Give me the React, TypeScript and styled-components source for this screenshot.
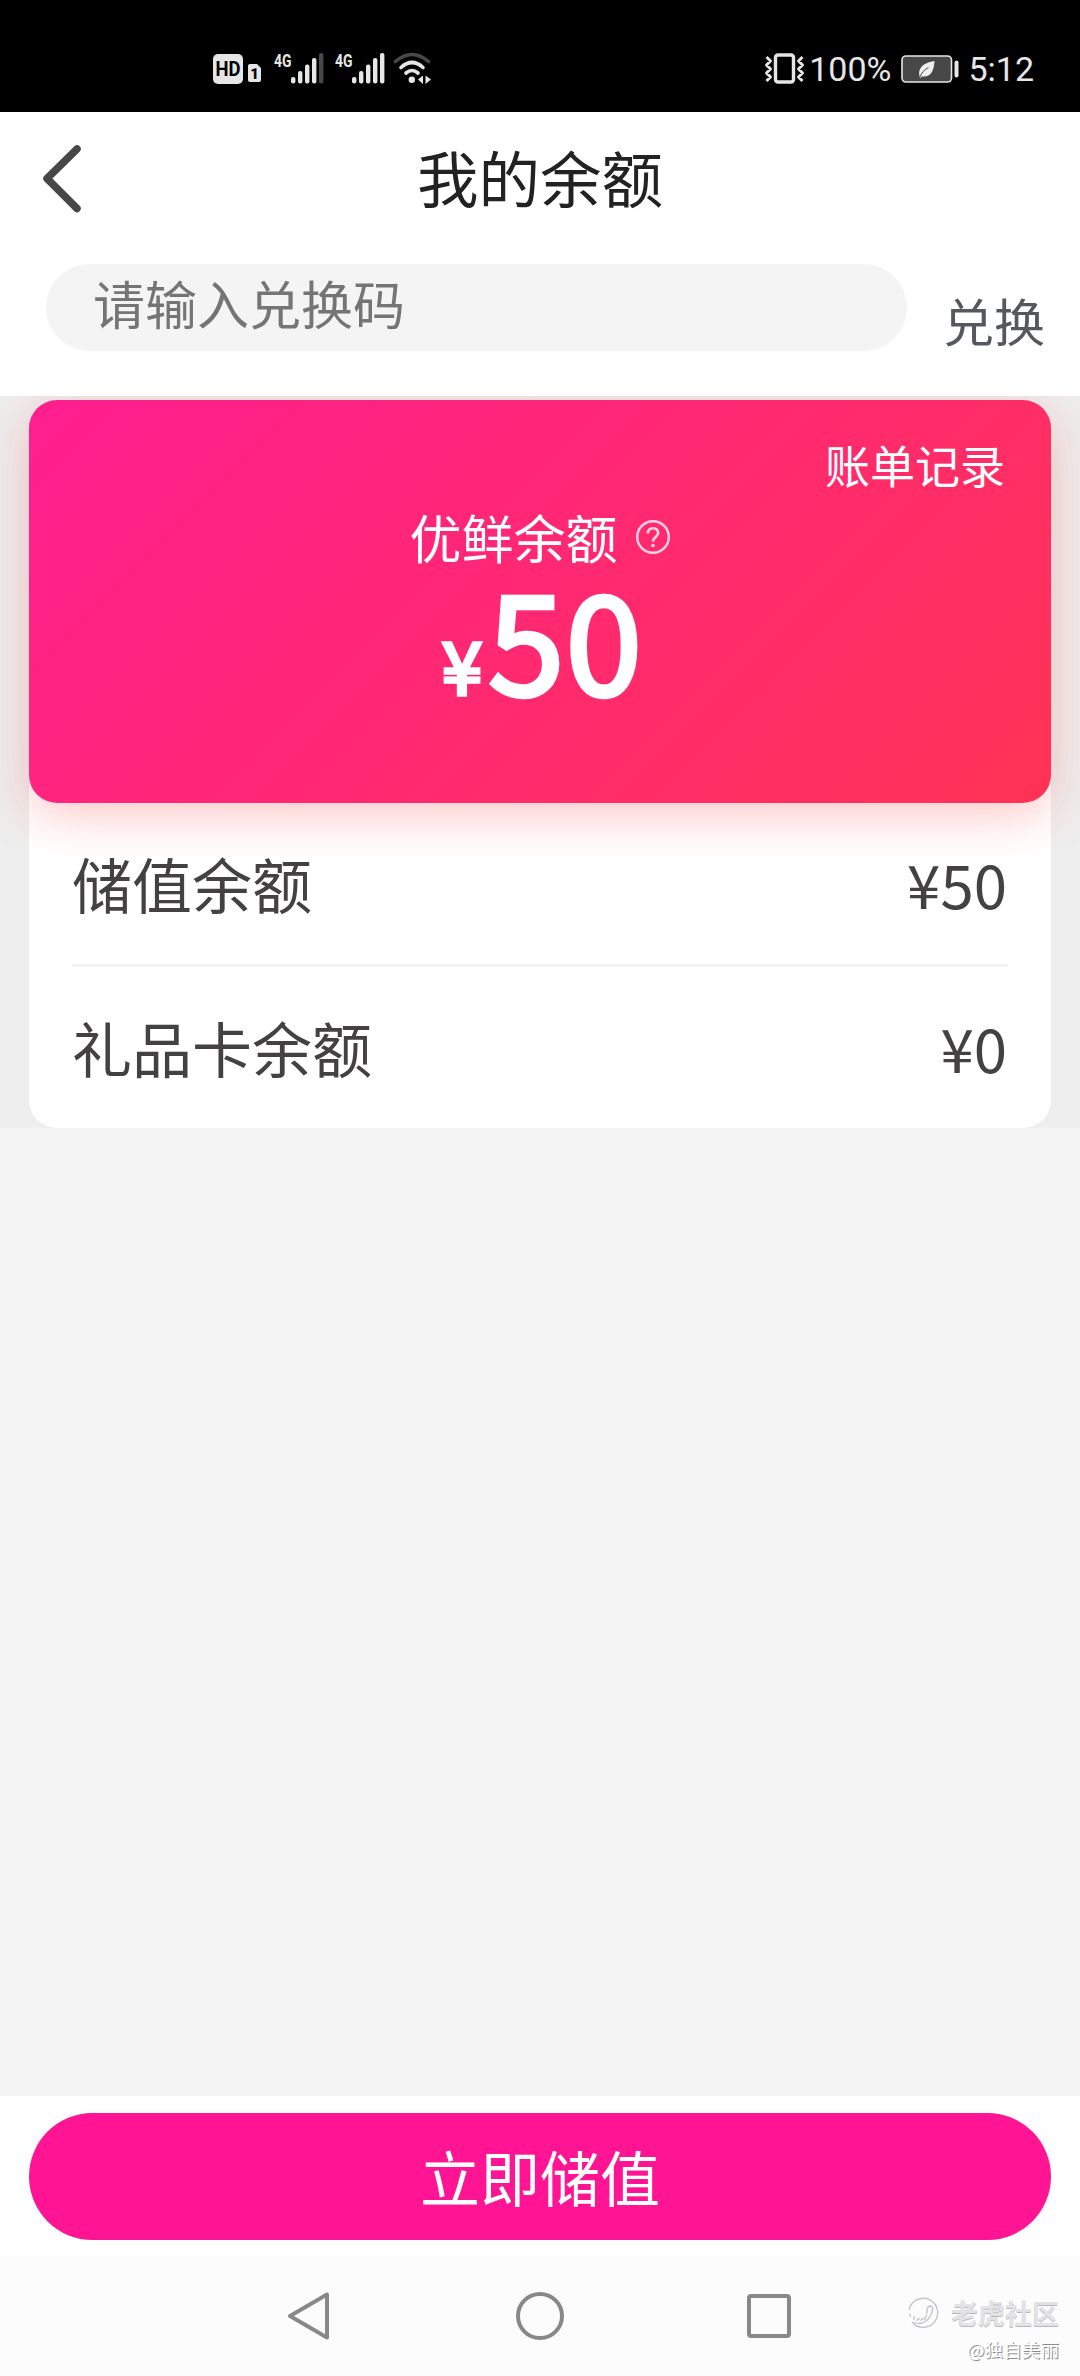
import React from 'react';
import styled, { createGlobalStyle } from 'styled-components';

const GlobalStyle = createGlobalStyle`
  * { box-sizing: border-box; }
  body { margin: 0; background: #f4f4f4; }
`;

const cjk = `'Noto Sans CJK SC', 'Noto Sans', sans-serif`;

const Screen = styled.div`
  width: 1080px;
  height: 2376px;
  display: flex;
  flex-direction: column;
  background: #f4f4f4;
  font-family: ${cjk};
  overflow: hidden;
`;

const StatusBar = styled.div`
  height: 112px;
  flex: none;
  display: flex;
  justify-content: space-between;
  align-items: flex-start;
  padding: 48px 46px 0 208px;
  background: #000;
  color: #e6e6e6;
`;

const StatusGroup = styled.div`
  display: flex;
  align-items: center;
  height: 42px;
`;

const StatusText = styled.span<{ $left?: number }>`
  font: 400 34px/42px Roboto, sans-serif;
  margin-left: ${p => p.$left ?? 0}px;
`;

const Battery = styled.svg`
  margin-left: 10px;
`;

const Top = styled.div`
  position: relative;
  z-index: 2;
  flex: none;
  height: 284px;
  background: #fff;
`;

const Header = styled.header`
  display: grid;
  grid-template-columns: 120px 1fr 120px;
  height: 152px;
  align-items: start;
`;

const BackButton = styled.button`
  border: 0;
  background: none;
  padding: 29px 0 0 38px;
  height: 130px;
  display: flex;
`;

const Title = styled.h1`
  margin: 0;
  font-size: 61.5px;
  line-height: 129px;
  font-weight: 400;
  text-align: center;
  color: #222;
`;

const RedeemRow = styled.div`
  display: flex;
  padding-left: 46px;
`;

const CodeField = styled.div`
  width: 861px;
  height: 87px;
  border-radius: 44px;
  background: #f4f4f4;
  padding-left: 47px;
  font-size: 52px;
  line-height: 77px;
  color: #757575;
`;

const RedeemButton = styled.div`
  margin-left: 36px;
  font-size: 51px;
  line-height: 113px;
  color: #55585d;
`;

const Wallet = styled.section`
  flex: none;
  height: 732px;
  overflow: hidden;
  padding: 4px 29px 0;
  background: #eee;
`;

const BalanceCard = styled.div`
  position: relative;
  z-index: 1;
  height: 403px;
  border-radius: 28px;
  padding-top: 42px;
  display: flex;
  flex-direction: column;
  background: linear-gradient(135deg, #ff1e8f 0%, #ff3355 100%);
  box-shadow: 0 12px 50px rgba(255, 51, 51, 0.28);
  color: #fff;
`;

const BillLink = styled.div`
  align-self: flex-end;
  margin-right: 46px;
  font-size: 45px;
  line-height: 46px;
`;

const BalanceLabel = styled.div`
  display: flex;
  align-items: center;
  align-self: center;
  gap: 17px;
  margin: 23px 0 0;
  font-size: 52px;
  line-height: 52px;
`;

const Amount = styled.div`
  display: flex;
  justify-content: center;
  align-items: baseline;
  padding-left: 5px;
  margin-top: 1px;
  line-height: 142px;
`;

const Currency = styled.span`
  font-size: 73px;
  -webkit-text-stroke: 3.6px #fff;
  margin-right: 6px;
`;

const Digits = styled.span`
  font-size: 137px;
  letter-spacing: 1.5px;
  -webkit-text-stroke: 4.6px #fff;
`;

const Breakdown = styled.div`
  margin-top: -46px;
  height: 371px;
  padding: 45px 43px 0;
  border-radius: 28px;
  background: #fff;
`;

const BreakdownRow = styled.div<{ $divided?: boolean }>`
  display: flex;
  justify-content: space-between;
  position: relative;
  z-index: 1;
  font-size: 60px;
  line-height: ${p => (p.$divided ? 161 : 159)}px;
  padding: 0 1px 0 0;
  height: 165px;
  color: #434141;
  border-bottom: ${p => (p.$divided ? '3px solid #f3f3f3' : '0')};
`;

const Spacer = styled.div`
  flex: 1;
`;

const ActionBar = styled.div`
  flex: none;
  height: 160px;
  padding: 17px 29px 0;
  background: #fff;
`;

const TopUpButton = styled.div`
  height: 127px;
  border-radius: 64px;
  background: #ff1493;
  color: #fff;
  font-size: 60px;
  line-height: 125px;
  text-align: center;
`;

const NavBar = styled.nav`
  flex: none;
  height: 120px;
  display: flex;
  padding: 30px 21px 0 279px;
  background: #fcfcfc;
`;

const NavIcon = styled.svg<{ $gap?: number }>`
  flex: none;
  margin-right: ${p => p.$gap ?? 0}px;
`;

const Watermark = styled.div`
  flex: 1;
  display: flex;
  flex-direction: column;
  align-items: flex-end;
  padding-top: 10px;
`;

const Community = styled.div`
  display: flex;
  align-items: center;
  gap: 12px;
  font-size: 27px;
  line-height: 34px;
  font-weight: 700;
  color: #e3e3e6;
  text-shadow: 0 1px 0 #b8b8be;
`;

const Author = styled.div`
  margin-top: 7px;
  font-size: 18.6px;
  line-height: 24px;
  color: #fcfcfc;
  text-shadow: 1px 1px 0 #8c8c8c;
`;

const Signal = ({ x, weak }: { x: number; weak?: boolean }) => (
  <g transform={`translate(${x} 0)`}>
    <text x="0" y="18.5" fontFamily="Roboto" fontWeight="700" fontSize="19" textLength="17.5" lengthAdjust="spacingAndGlyphs">4G</text>
    <rect x="17" y="29" width="4.4" height="6.5" rx="2" />
    <rect x="24" y="23" width="4.4" height="12.5" rx="2" />
    <rect x="31" y="16.5" width="4.4" height="19" rx="2" />
    <rect x="38" y="10" width="4.4" height="25.5" rx="2" />
    <rect x="45" y="5" width="4.4" height="30.5" rx="2" fill={weak ? '#484848' : undefined} />
  </g>
);

const NetworkIcons = () => (
  <svg width="230" height="42" viewBox="0 0 230 42" fill="#e6e6e6">
    <rect x="5" y="6" width="30" height="30" rx="5" />
    <text x="7.5" y="28" fontFamily="Roboto" fontWeight="700" fontSize="20" textLength="25" lengthAdjust="spacingAndGlyphs" fill="#000">HD</text>
    <path d="M42 16h7l4 4v12a2 2 0 0 1-2 2h-9a2 2 0 0 1-2-2V18a2 2 0 0 1 2-2z" />
    <text x="42.3" y="31" fontFamily="Roboto" fontWeight="900" fontSize="15" fill="#000">1</text>
    <Signal x={66} weak />
    <Signal x={127} />
    <g fill="none" strokeLinecap="round" strokeWidth="3.6">
      <path d="M187.5 13.5Q204 -0.5 220.5 13.5" stroke="#484848" />
      <path d="M193 19.5Q204 9.5 215 19.5" stroke="#e6e6e6" />
      <path d="M198 25Q204 20 210 25" stroke="#e6e6e6" />
    </g>
    <circle cx="203.8" cy="31.8" r="3.2" />
    <path d="M215 27.5v8.5l-5-4.5zM217.5 27.5l5.5 4-5.5 4.5z" />
  </svg>
);

const VibrateIcon = () => (
  <svg width="47" height="42" viewBox="0 0 47 42" fill="none" stroke="#e6e6e6">
    <rect x="13.5" y="7" width="18" height="27" rx="2.5" strokeWidth="3.4" />
    <path d="M4.5 9l4 4-4 4 4 4-4 4 4 4-4 4M40.5 9l-4 4 4 4-4 4 4 4-4 4 4 4" strokeWidth="3" strokeLinejoin="round" />
  </svg>
);

const App = () => (
  <>
    <GlobalStyle />
    <Screen>
      <StatusBar>
        <StatusGroup>
          <NetworkIcons />
        </StatusGroup>
        <StatusGroup>
          <VibrateIcon />
          <StatusText>100%</StatusText>
          <Battery width="60" height="42" viewBox="0 0 60 42">
            <rect x="1" y="8" width="49.5" height="26" rx="4" fill="#484848" stroke="#e6e6e6" strokeWidth="1.6" />
            <rect x="53.5" y="12.5" width="4" height="17" rx="2" fill="#e6e6e6" />
            <path d="M18.5 28C16.5 18 25 14.5 33.5 13C33 21 31 29.5 21 28.5L19 30z" fill="#eee" />
            <path d="M19 29Q21 23 27.5 19.5" stroke="#484848" fill="none" />
          </Battery>
          <StatusText $left={7}>5:12</StatusText>
        </StatusGroup>
      </StatusBar>

      <Top>
        <Header>
          <BackButton>
            <svg width="48" height="76" viewBox="0 0 48 76" fill="none" stroke="#474747" strokeWidth="7.5" strokeLinecap="round" strokeLinejoin="round">
              <path d="M39 8L9 37.5L39 67.5" />
            </svg>
          </BackButton>
          <Title>我的余额</Title>
        </Header>
        <RedeemRow>
          <CodeField>请输入兑换码</CodeField>
          <RedeemButton>兑换</RedeemButton>
        </RedeemRow>
      </Top>

      <Wallet>
        <BalanceCard>
          <BillLink>账单记录</BillLink>
          <BalanceLabel>
            优鲜余额
            <svg width="36" height="36" viewBox="0 0 36 36" fill="none" stroke="#ffd5e5" strokeWidth="2.4">
              <circle cx="18" cy="18" r="15.8" />
              <path d="M12.8 14.5Q13 9.2 18 9.2T23.2 14C23.2 17.5 18 18 18 22.5" strokeWidth="2.6" />
              <circle cx="18" cy="26.5" r="1.8" fill="#ffd5e5" stroke="none" />
            </svg>
          </BalanceLabel>
          <Amount>
            <Currency>¥</Currency>
            <Digits>50</Digits>
          </Amount>
        </BalanceCard>
        <Breakdown>
          <BreakdownRow $divided>
            <span>储值余额</span>
            <span>¥50</span>
          </BreakdownRow>
          <BreakdownRow>
            <span>礼品卡余额</span>
            <span>¥0</span>
          </BreakdownRow>
        </Breakdown>
      </Wallet>

      <Spacer />

      <ActionBar>
        <TopUpButton>立即储值</TopUpButton>
      </ActionBar>
      <NavBar>
        <NavIcon $gap={171} width="60" height="60" viewBox="0 0 60 60" fill="none" stroke="#888" strokeWidth="4" strokeLinejoin="round">
          <path d="M48 8.5V51.5L11 30z" />
        </NavIcon>
        <NavIcon $gap={169} width="60" height="60" viewBox="0 0 60 60" fill="none" stroke="#888" strokeWidth="4">
          <circle cx="30" cy="30" r="22" />
        </NavIcon>
        <NavIcon width="60" height="60" viewBox="0 0 60 60" fill="none" stroke="#888" strokeWidth="4">
          <rect x="10" y="10" width="40" height="40" rx="2" />
        </NavIcon>
        <Watermark>
          <Community>
            <svg width="31" height="32" viewBox="0 0 31 32" fill="none" stroke="#c2c2c8" strokeWidth="1.3">
              <path d="M1 13A14.5 14.5 0 1 1 4 25" />
              <path d="M1 17l2 3M6 19v4M9 24q0-3 3-2M13 24q0-3 3-2M17 23q0-4 2-5M19 17Q18 10 22 9Q26 10 24 15Q21 24 14 26Q9 27 6 25" />
            </svg>
            老虎社区
          </Community>
          <Author>@独自美丽</Author>
        </Watermark>
      </NavBar>
    </Screen>
  </>
);

export default App;
